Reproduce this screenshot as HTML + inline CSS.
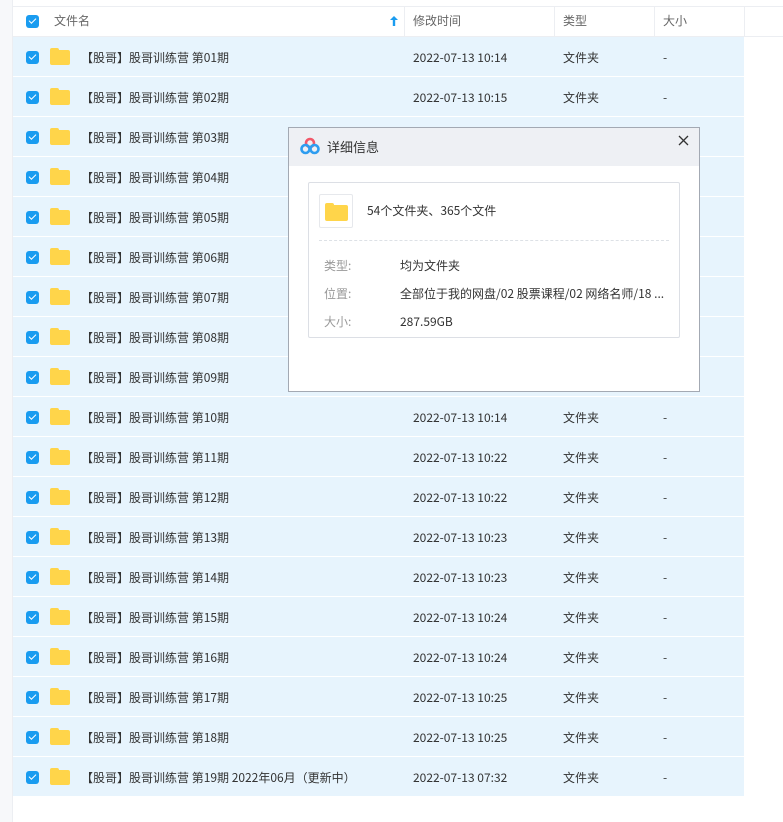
<!DOCTYPE html>
<html><head><meta charset="utf-8"><style>
*{margin:0;padding:0;box-sizing:border-box}
body{width:783px;height:822px;background:#fff;font-family:"Noto Sans CJK SC","Liberation Sans",sans-serif;font-size:12px;line-height:16px;color:#333;position:relative;overflow:hidden}
.gut{position:absolute;left:0;top:0;width:13px;height:822px;background:#f7f8fa;border-right:1px solid #eceef2}
.topl{position:absolute;left:13px;top:6px;width:770px;height:1px;background:#eceef2}
.hdr{position:absolute;left:13px;top:7px;width:770px;height:30px;border-bottom:1px solid #eceef2;color:#666}
.hdr span{position:absolute;top:6px}
.vd{position:absolute;top:0;width:1px;height:30px;background:#eceef2}
.cb{position:absolute;width:13px;height:13px;border-radius:3px;background:#1a9cf0}
.cb:after{content:"";position:absolute;left:3px;top:2.5px;width:6px;height:3px;border-left:1.6px solid #fff;border-bottom:1.6px solid #fff;transform:rotate(-45deg)}
.row{position:absolute;left:13px;width:731px;height:39px;background:#e7f4fd}
.row .cb{left:13px;top:14px}
.fold{position:absolute;left:37px;top:13px;width:20px;height:15px;background:#ffd54a;border-radius:2px}
.fold:before{content:"";position:absolute;left:0;top:-2px;width:9px;height:4px;background:#ffd54a;border-radius:2px 2px 0 0}
.row span{position:absolute;top:13px;color:#333}
.row span.n{left:68px}
.dlg{position:absolute;left:288px;top:127px;width:412px;height:265px;border:1px solid #a3a9b3;background:#fff}
.dh{height:38px;background:#eef0f4;position:relative}
.dh span{position:absolute;left:38px;top:11px;font-size:13px;color:#333}
.box{position:absolute;left:19px;top:54px;width:372px;height:156px;border:1px solid #dcdfe5;border-radius:2px}
.fb{position:absolute;left:10px;top:11px;width:34px;height:34px;border:1px solid #e6e8ec;border-radius:2px;background:#fff}
.fb .fold{left:5px;top:10px;width:23px;height:16px}
.dash{position:absolute;left:10px;top:57px;width:350px;border-top:1px dashed #dde1e6}
.lab{position:absolute;left:15px;color:#999}
.val{position:absolute;left:91px;color:#333}
</style></head><body>
<div class="gut"></div><div class="topl"></div>
<div class="hdr">
<div class="cb" style="left:13px;top:8px"></div>
<span style="left:41px">文件名</span>
<svg style="position:absolute;left:377px;top:9px" width="8" height="10" viewBox="0 0 8 10"><path d="M4 0L8 4H5.2V10H2.8V4H0Z" fill="#1a9cf0"/></svg>
<div class="vd" style="left:391px"></div>
<span style="left:400px">修改时间</span>
<div class="vd" style="left:541px"></div>
<span style="left:550px">类型</span>
<div class="vd" style="left:641px"></div>
<span style="left:650px">大小</span>
<div class="vd" style="left:731px"></div>
</div>
<div class="row" style="top:37px"><div class="cb"></div><div class="fold"></div><span class="n">【股哥】股哥训练营 第01期</span><span style="left:400px">2022-07-13 10:14</span><span style="left:550px">文件夹</span><span style="left:650px">-</span></div>
<div class="row" style="top:77px"><div class="cb"></div><div class="fold"></div><span class="n">【股哥】股哥训练营 第02期</span><span style="left:400px">2022-07-13 10:15</span><span style="left:550px">文件夹</span><span style="left:650px">-</span></div>
<div class="row" style="top:117px"><div class="cb"></div><div class="fold"></div><span class="n">【股哥】股哥训练营 第03期</span></div>
<div class="row" style="top:157px"><div class="cb"></div><div class="fold"></div><span class="n">【股哥】股哥训练营 第04期</span></div>
<div class="row" style="top:197px"><div class="cb"></div><div class="fold"></div><span class="n">【股哥】股哥训练营 第05期</span></div>
<div class="row" style="top:237px"><div class="cb"></div><div class="fold"></div><span class="n">【股哥】股哥训练营 第06期</span></div>
<div class="row" style="top:277px"><div class="cb"></div><div class="fold"></div><span class="n">【股哥】股哥训练营 第07期</span></div>
<div class="row" style="top:317px"><div class="cb"></div><div class="fold"></div><span class="n">【股哥】股哥训练营 第08期</span></div>
<div class="row" style="top:357px"><div class="cb"></div><div class="fold"></div><span class="n">【股哥】股哥训练营 第09期</span></div>
<div class="row" style="top:397px"><div class="cb"></div><div class="fold"></div><span class="n">【股哥】股哥训练营 第10期</span><span style="left:400px">2022-07-13 10:14</span><span style="left:550px">文件夹</span><span style="left:650px">-</span></div>
<div class="row" style="top:437px"><div class="cb"></div><div class="fold"></div><span class="n">【股哥】股哥训练营 第11期</span><span style="left:400px">2022-07-13 10:22</span><span style="left:550px">文件夹</span><span style="left:650px">-</span></div>
<div class="row" style="top:477px"><div class="cb"></div><div class="fold"></div><span class="n">【股哥】股哥训练营 第12期</span><span style="left:400px">2022-07-13 10:22</span><span style="left:550px">文件夹</span><span style="left:650px">-</span></div>
<div class="row" style="top:517px"><div class="cb"></div><div class="fold"></div><span class="n">【股哥】股哥训练营 第13期</span><span style="left:400px">2022-07-13 10:23</span><span style="left:550px">文件夹</span><span style="left:650px">-</span></div>
<div class="row" style="top:557px"><div class="cb"></div><div class="fold"></div><span class="n">【股哥】股哥训练营 第14期</span><span style="left:400px">2022-07-13 10:23</span><span style="left:550px">文件夹</span><span style="left:650px">-</span></div>
<div class="row" style="top:597px"><div class="cb"></div><div class="fold"></div><span class="n">【股哥】股哥训练营 第15期</span><span style="left:400px">2022-07-13 10:24</span><span style="left:550px">文件夹</span><span style="left:650px">-</span></div>
<div class="row" style="top:637px"><div class="cb"></div><div class="fold"></div><span class="n">【股哥】股哥训练营 第16期</span><span style="left:400px">2022-07-13 10:24</span><span style="left:550px">文件夹</span><span style="left:650px">-</span></div>
<div class="row" style="top:677px"><div class="cb"></div><div class="fold"></div><span class="n">【股哥】股哥训练营 第17期</span><span style="left:400px">2022-07-13 10:25</span><span style="left:550px">文件夹</span><span style="left:650px">-</span></div>
<div class="row" style="top:717px"><div class="cb"></div><div class="fold"></div><span class="n">【股哥】股哥训练营 第18期</span><span style="left:400px">2022-07-13 10:25</span><span style="left:550px">文件夹</span><span style="left:650px">-</span></div>
<div class="row" style="top:757px"><div class="cb"></div><div class="fold"></div><span class="n">【股哥】股哥训练营 第19期 2022年06月（更新中）</span><span style="left:400px">2022-07-13 07:32</span><span style="left:550px">文件夹</span><span style="left:650px">-</span></div>

<div class="dlg">
<div class="dh">
<svg style="position:absolute;left:11px;top:9px" width="20" height="18" viewBox="0 0 20 18">
<circle cx="10" cy="6" r="4" fill="none" stroke="#f2586a" stroke-width="2.6"/>
<circle cx="5.5" cy="12" r="4" fill="none" stroke="#2e9df0" stroke-width="2.6"/>
<circle cx="14.5" cy="12" r="4" fill="none" stroke="#2e9df0" stroke-width="2.6"/>
</svg>
<span>详细信息</span>
<svg style="position:absolute;left:389px;top:7px" width="11" height="11" viewBox="0 0 11 11"><path d="M1 1L10 10M10 1L1 10" stroke="#333" stroke-width="1.3"/></svg>
</div>
<div class="box">
<div class="fb"><div class="fold"></div></div>
<div style="position:absolute;left:58px;top:20px;font-size:12px">54个文件夹、365个文件</div>
<div class="dash"></div>
<div class="lab" style="top:75px">类型:</div><div class="val" style="top:75px">均为文件夹</div>
<div class="lab" style="top:103px">位置:</div><div class="val" style="top:103px">全部位于我的网盘/02 股票课程/02 网络名师/18 ...</div>
<div class="lab" style="top:131px">大小:</div><div class="val" style="top:131px">287.59GB</div>
</div>
</div>
</body></html>
